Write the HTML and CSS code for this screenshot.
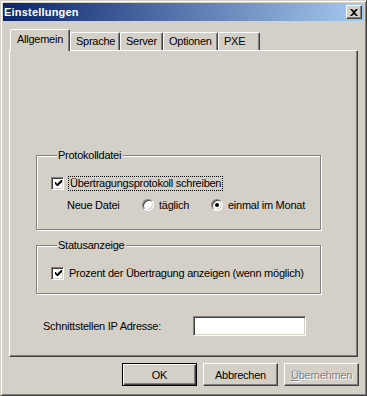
FILE: index.html
```html
<!doctype html>
<html lang="de">
<head>
<meta charset="utf-8">
<title>Einstellungen</title>
<link rel="stylesheet" href="styles.css">
</head>
<body>
<div class="fenster">
	<div class="titelleiste">
		<span class="titel">Einstellungen</span>
		<button class="schliessen" aria-label="Schließen">
			<svg width="8" height="7" viewBox="0 0 8 7"><path d="M0 0h2l2 2 2-2h2L5 3.5 8 7H6L4 5 2 7H0l3-3.5z" fill="#000"/></svg>
		</button>
	</div>
	<div class="inhalt">
		<div class="reiter-leiste">
			<div class="reiter aktiv r1">Allgemein</div>
			<div class="reiter r2">Sprache</div>
			<div class="reiter r3">Server</div>
			<div class="reiter r4">Optionen</div>
			<div class="reiter r5">PXE</div>
		</div>
		<div class="seite">
			<fieldset class="gruppe gruppe-protokoll">
				<legend>Protokolldatei</legend>
				<div class="zeile zeile-check">
					<span class="kasten"><svg width="7" height="7" viewBox="0 0 7 7"><path d="M0 2h1l1 2 4-4h1v2L3 6H2L0 4z" fill="#000"/></svg></span>
					<span class="fokus">Übertragungsprotokoll schreiben</span>
				</div>
				<div class="zeile zeile-radio">
					<span class="neue-datei">Neue Datei</span>
					<span class="radio"></span>
					<span class="radio-text kurz">täglich</span>
					<span class="radio an"><span class="punkt"></span></span>
					<span class="radio-text">einmal im Monat</span>
				</div>
			</fieldset>
			<fieldset class="gruppe gruppe-status">
				<legend>Statusanzeige</legend>
				<div class="zeile zeile-check">
					<span class="kasten"><svg width="7" height="7" viewBox="0 0 7 7"><path d="M0 2h1l1 2 4-4h1v2L3 6H2L0 4z" fill="#000"/></svg></span>
					<span class="check-text">Prozent der Übertragung anzeigen (wenn möglich)</span>
				</div>
			</fieldset>
			<div class="ip-zeile">
				<span class="ip-label">Schnittstellen IP Adresse:</span>
				<span class="eingabe"></span>
			</div>
		</div>
		<div class="knopf-leiste">
			<button class="knopf standard">OK</button>
			<button class="knopf">Abbrechen</button>
			<button class="knopf inaktiv"><u>Ü</u>bernehmen</button>
		</div>
	</div>
</div>
</body>
</html>
```
FILE: styles.css
```css
*
{
	margin: 0;
	padding: 0;
	box-sizing: border-box;
}
body
{
	font-family: "Liberation Sans", Arial, sans-serif;
	font-size: 11px;
	letter-spacing: -0.25px;
	color: #000;
	background-color: #d4d0c8;
}
.fenster
{
	width: 367px;
	height: 396px;
	background-color: #d4d0c8;
	border: 1px solid;
	border-color: #d4d0c8 #404040 #404040 #d4d0c8;
	box-shadow: inset 1px 1px #fff, inset -1px -1px #808080;
	padding: 2px;
}
.titelleiste
{
	height: 18px;
	background: linear-gradient(to right, #0a246a, #a6caf0);
	display: flex;
	align-items: center;
	padding-left: 1px;
}
.titel
{
	flex: 1;
	color: #fff;
	font-weight: bold;
	font-size: 11px;
	letter-spacing: 0.2px;
}
.schliessen
{
	width: 16px;
	height: 14px;
	margin-right: 2px;
	background-color: #d4d0c8;
	border: 1px solid;
	border-color: #fff #404040 #404040 #fff;
	box-shadow: inset -1px -1px #808080;
	display: flex;
	align-items: center;
	justify-content: center;
}
.inhalt
{
	padding: 8px 5px 0 6px;
}
.reiter-leiste
{
	display: flex;
	align-items: flex-end;
	height: 21px;
	padding-left: 1px;
	position: relative;
	z-index: 1;
}
.reiter
{
	height: 18px;
	border: 1px solid;
	border-bottom: none;
	border-color: #fff #404040 #fff #fff;
	border-radius: 2px 2px 0 0;
	box-shadow: inset -1px 0 #808080;
	padding: 2px 0 0 5px;
	background-color: #d4d0c8;
}
.reiter.aktiv
{
	height: 22px;
	margin-bottom: -1px;
	padding: 3px 0 0 6px;
}
.r1 { width: 60px; }
.r2 { width: 50px; }
.r3 { width: 43px; }
.r4 { width: 55px; }
.r5 { width: 42px; }
.seite
{
	width: 349px;
	height: 307px;
	border: 1px solid;
	border-color: #fff #404040 #404040 #fff;
	box-shadow: inset -1px -1px #808080;
	padding: 98px 0 0 26px;
}
.gruppe
{
	width: 285px;
	border: 1px solid #808080;
	box-shadow: inset 1px 1px #fff, 1px 1px #fff;
	padding: 0 0 0 14px;
}
.gruppe legend
{
	margin-left: 6px;
	padding: 0 2px 0 1px;
	line-height: 13px;
	background-color: #d4d0c8;
}
.gruppe-protokoll
{
	padding-bottom: 17px;
}
.gruppe-status
{
	margin-top: 9px;
	padding-bottom: 13px;
}
.zeile
{
	display: flex;
	align-items: center;
	height: 14px;
}
.zeile-check
{
	margin-top: 14px;
}
.zeile-radio
{
	margin-top: 8px;
}
.kasten
{
	width: 13px;
	height: 13px;
	background-color: #fff;
	border: 1px solid;
	border-color: #808080 #fff #fff #808080;
	box-shadow: inset 1px 1px #404040, inset -1px -1px #d4d0c8;
	display: flex;
	align-items: center;
	justify-content: center;
}
.kasten svg
{
	margin: 1px 0 0 1px;
}
.fokus
{
	margin-left: 4px;
	padding: 0 1px;
	line-height: 13px;
	border: 1px dotted #000;
}
.check-text
{
	margin-left: 5px;
}
.neue-datei
{
	margin-left: 16px;
	width: 75px;
}
.radio
{
	width: 12px;
	height: 12px;
	border-radius: 50%;
	background-color: #fff;
	border: 1px solid;
	border-color: #808080 #fff #fff #808080;
	box-shadow: inset 1px 1px #404040, inset -1px -1px #d4d0c8;
	display: flex;
	align-items: center;
	justify-content: center;
}
.punkt
{
	width: 4px;
	height: 4px;
	border-radius: 50%;
	background-color: #000;
}
.radio-text
{
	margin-left: 5px;
	white-space: nowrap;
}
.radio-text.kurz
{
	width: 52px;
}
.ip-zeile
{
	display: flex;
	align-items: center;
	margin-top: 22px;
	padding-left: 7px;
}
.ip-label
{
	width: 150px;
}
.eingabe
{
	width: 113px;
	height: 20px;
	background-color: #fff;
	border: 1px solid;
	border-color: #808080 #fff #fff #808080;
	box-shadow: inset 1px 1px #404040, inset -1px -1px #d4d0c8;
}
.knopf-leiste
{
	display: flex;
	justify-content: flex-end;
	gap: 6px;
	margin-top: 6px;
}
.knopf
{
	width: 75px;
	height: 23px;
	font-family: "Liberation Sans", Arial, sans-serif;
	font-size: 11px;
	letter-spacing: -0.25px;
	background-color: #d4d0c8;
	border: 1px solid;
	border-color: #fff #404040 #404040 #fff;
	box-shadow: inset -1px -1px #808080;
}
.knopf.standard
{
	border: 1px solid #000;
	box-shadow: inset 1px 1px #fff, inset -1px -1px #404040, inset -2px -2px #808080;
}
.knopf.inaktiv
{
	color: #808080;
	text-shadow: 1px 1px #fff;
}
```
